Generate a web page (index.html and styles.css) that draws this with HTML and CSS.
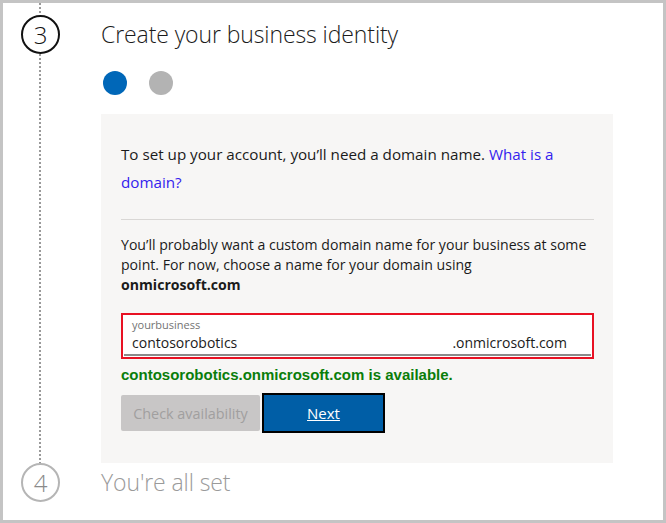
FILE: index.html
```html
<!DOCTYPE html>
<html lang="en">
<head>
<meta charset="utf-8">
<title>Create your business identity</title>
<link rel="stylesheet" href="styles.css">
</head>
<body>
<div class="frame">
  <div class="step step-current">
    <div class="rail">
      <div class="dots dots-top"></div>
      <div class="num num-active">3</div>
      <div class="dots dots-fill"></div>
    </div>
    <div class="step-body">
      <h1 class="title">Create your business identity</h1>
      <div class="pager">
        <span class="pip pip-on"></span>
        <span class="pip"></span>
      </div>
      <div class="panel">
        <p class="intro">To set up your account, you’ll need a domain name. <a class="link" href="#">What is a domain?</a></p>
        <hr class="sep">
        <p class="desc">You’ll probably want a custom domain name for your business at some point. For now, choose a name for your domain using<br><b>onmicrosoft.com</b></p>
        <div class="field">
          <div class="field-inner">
            <div class="field-label">yourbusiness</div>
            <div class="field-row">
              <span class="field-value">contosorobotics</span>
              <span class="field-suffix">.onmicrosoft.com</span>
            </div>
          </div>
        </div>
        <p class="ok">contosorobotics.onmicrosoft.com is available.</p>
        <div class="actions">
          <button class="btn btn-disabled" type="button">Check availability</button>
          <button class="btn btn-primary" type="button">Next</button>
        </div>
      </div>
    </div>
  </div>
  <div class="step step-next">
    <div class="rail">
      <div class="num num-muted">4</div>
    </div>
    <div class="step-body">
      <h2 class="title title-muted">You're all set</h2>
    </div>
  </div>
</div>
</body>
</html>
```
FILE: styles.css
```css
* { box-sizing: border-box; }
html, body { margin: 0; padding: 0; background: #fff; }
body {
  font-family: "Open Sans", "Noto Sans", "Liberation Sans", sans-serif;
  color: #1b1b1b;
}
.frame {
  width: 666px;
  height: 523px;
  border: 3px solid #c4c4c4;
  display: flex;
  flex-direction: column;
  overflow: hidden;
}
.step { display: flex; }
.rail {
  width: 98px;
  flex: none;
  display: flex;
  flex-direction: column;
  align-items: flex-start;
  padding-left: 18px;
}
.dots {
  width: 2px;
  margin-left: 18px;
  background-image: linear-gradient(to bottom, #9a9a9a 50%, transparent 50%);
  background-size: 2px 4px;
}
.dots-top { height: 12px; }
.dots-fill { flex: 1; }
.num {
  width: 39px;
  height: 39px;
  border-radius: 50%;
  display: flex;
  align-items: center;
  justify-content: center;
  font-size: 24px;
  font-weight: 300;
  line-height: 1;
  flex: none;
}
.num-active { border: 2px solid #111; color: #111; }
.num-muted { border: 2px solid #b5b5b5; color: #8a8a8a; }
.step-body { width: 512px; }
.title {
  margin: 0;
  font-size: 23px;
  font-weight: 300;
  line-height: 30px;
  color: #1b1b1b;
  padding-top: 16px;
  letter-spacing: -0.1px;
}
.title-muted { color: #9a9a9a; padding-top: 4px; }
.pager { display: flex; gap: 22px; padding: 22px 0 19px 2px; }
.pip { width: 24px; height: 24px; border-radius: 50%; background: #b3b3b3; }
.pip-on { background: #0067b8; }
.panel {
  background: #f7f6f5;
  padding: 26px 19px 30px 20px;
}
.intro {
  margin: 0;
  font-size: 15.2px;
  line-height: 28px;
}
.link { color: #3322ee; text-decoration: none; }
.sep {
  border: 0;
  height: 1px;
  background: #d9d7d5;
  margin: 23px 0 15px;
}
.desc {
  margin: 0;
  font-size: 14.1px;
  line-height: 20px;
}
.desc b { font-weight: 700; }
.field {
  margin-top: 18px;
  border: 2px solid #e81123;
  background: #fff;
  padding: 1px;
}
.field-inner {
  border-bottom: 2px solid #8a8a8a;
  padding: 2px 24px 2px 8px;
}
.field-label {
  font-size: 11px;
  line-height: 14px;
  color: #737373;
  margin-bottom: 2px;
}
.field-row {
  display: flex;
  justify-content: space-between;
  font-size: 14px;
  line-height: 18px;
  color: #1b1b1b;
}
.ok {
  margin: 6px 0 0;
  font-family: "Liberation Sans", Arial, sans-serif;
  font-weight: 700;
  font-size: 15px;
  line-height: 20px;
  color: #0a7d0a;
}
.actions {
  margin-top: 8px;
  display: flex;
  align-items: center;
  gap: 2px;
}
.btn {
  font-family: inherit;
  font-size: 15px;
  border-radius: 0;
  cursor: pointer;
}
.btn-disabled {
  width: 139px;
  height: 36px;
  border: 0;
  background: #c8c6c6;
  color: #a19f9f;
  border-radius: 2px;
  font-size: 14.4px;
}
.btn-primary {
  width: 123px;
  height: 40px;
  border: 2px solid #000;
  background: #005ea6;
  color: #fff;
  text-decoration: underline;
}
```
